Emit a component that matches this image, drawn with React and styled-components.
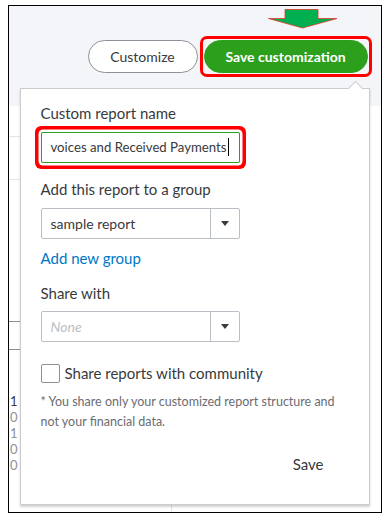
import styled, {createGlobalStyle} from "styled-components";

const GlobalStyle = createGlobalStyle`
  html, body {
    margin: 0;
    padding: 0;
    background: #fff;
  }
  body {
    font-family: Lato, "Open Sans", sans-serif;
    color: #393a3d;
  }
`

const Frame = styled.div`
  position: relative;
  box-sizing: border-box;
  width: 374px;
  height: 508px;
  margin: 5px 0 0 8px;
  border: 1.5px solid #000;
  overflow: hidden;
  background: #fff;
`

const Header = styled.div`
  position: relative;
  box-sizing: border-box;
  height: 100px;
  padding: 29.5px 9.5px 0 0;
  background: #f4f5f8;
  display: flex;
  justify-content: flex-end;
  align-items: flex-start;
  gap: 2px;
`

const Arrow = styled.svg`
  position: absolute;
  left: 258px;
  top: 3px;
`

const PillButton = styled.button`
  box-sizing: border-box;
  height: 33px;
  border-radius: 17px;
  font-family: Lato, "Open Sans", sans-serif;
  font-size: 14px;
  cursor: pointer;
  padding: 0;
  width: ${p => p.$width}px;
  margin-top: ${p => p.$offset || 0}px;
  border: 1px solid ${p => (p.$primary ? "#2ca01c" : "#8d9096")};
  background: ${p => (p.$primary ? "#2ca01c" : "#fff")};
  color: ${p => (p.$primary ? "#fff" : "#393a3d")};
  font-weight: ${p => (p.$primary ? 700 : 400)};
`

const Highlight = styled.div`
  display: flex;
  padding: 1px;
  border: 3px solid #f00;
  border-radius: 7px;
`

const Report = styled.div`
  display: flex;
  height: 406px;
`

const LeftColumn = styled.div`
  width: 162px;
  border-right: 1px solid #e3e5ea;
  display: flex;
  flex-direction: column;
`

const Row = styled.div`
  box-sizing: border-box;
  height: ${p => p.$h}px;
  border-bottom: 1px solid ${p => p.$line || "transparent"};
`

const Cells = styled.div`
  display: flex;
  flex-direction: column;
  padding: 0 0 0 1px;
  font-family: Lato, "Open Sans", sans-serif;
  font-size: 13px;
  line-height: 16px;
`

const Cell = styled.div`
  color: ${p => (p.$dark ? "#393a3d" : "#8d9096")};
`

const Popover = styled.div`
  position: absolute;
  left: 10.5px;
  top: 81.5px;
  width: 350px;
  box-sizing: border-box;
  padding: 14px 20px 30px 20px;
  background: #fff;
  border: 1px solid #ccc;
  box-shadow: 0 2px 2px rgba(0, 0, 0, 0.18);
  display: flex;
  flex-direction: column;
`

const Caret = styled.div`
  position: absolute;
  right: 8px;
  top: -6px;
  width: 10px;
  height: 10px;
  background: #fff;
  border-top: 1px solid #ccc;
  border-left: 1px solid #ccc;
  transform: rotate(45deg);
`

const Label = styled.div`
  font-size: 15px;
  line-height: 20px;
  color: #393a3d;
  margin-top: ${p => p.$top || 0}px;
`

const TextBox = styled.div`
  box-sizing: border-box;
  width: 199px;
  height: 31px;
  margin-top: 9px;
  border: 1px solid #2ca01c;
  border-radius: 2px;
  display: flex;
  align-items: center;
  padding-left: 9px;
  font-size: 13.2px;
  color: #393a3d;
  white-space: nowrap;
  overflow: hidden;
  box-shadow: 0 0 0 2.5px #fff, 0 0 0 6px #f00;
`

const Cursor = styled.span`
  display: inline-block;
  width: 1px;
  height: 18px;
  background: #000;
  margin-left: 1px;
`

const Select = styled.div`
  box-sizing: border-box;
  width: 199px;
  height: 31px;
  margin-top: ${p => p.$top || 9}px;
  border: 1px solid #babec5;
  border-radius: 2px;
  display: flex;
  align-items: stretch;
`

const SelectValue = styled.div`
  flex: 1;
  display: flex;
  align-items: center;
  padding-left: 9px;
  font-size: 14px;
  color: ${p => (p.$placeholder ? "#babec5" : "#393a3d")};
  font-style: ${p => (p.$placeholder ? "italic" : "normal")};
`

const SelectToggle = styled.div`
  width: 28px;
  border-left: 1px solid #babec5;
  display: flex;
  align-items: center;
  justify-content: center;
`

const Link = styled.a`
  margin-top: 9px;
  font-size: 15px;
  line-height: 20px;
  color: #0077c5;
  text-decoration: none;
  cursor: pointer;
`

const CheckRow = styled.label`
  display: flex;
  align-items: center;
  gap: 5px;
  margin-top: 22px;
  font-size: 15px;
  color: #393a3d;
`

const Box = styled.span`
  box-sizing: border-box;
  width: 19px;
  height: 19px;
  border: 1px solid #8d9096;
  border-radius: 2px;
  background: #fff;
`

const Note = styled.p`
  margin: 9px 0 0 0;
  font-size: 12.5px;
  line-height: 20px;
  color: #6b6c72;
`

const Footer = styled.div`
  display: flex;
  justify-content: flex-end;
  margin-top: 22px;
  padding-right: 25px;
`

const TextButton = styled.button`
  border: none;
  background: none;
  padding: 0;
  font-family: Lato, "Open Sans", sans-serif;
  font-size: 15px;
  line-height: 20px;
  color: #393a3d;
  cursor: pointer;
`

const Triangle = () => (
    <svg width="8" height="5" viewBox="0 0 8 5">
        <path d="M0 0 H8 L4 5 Z" fill="#393a3d"/>
    </svg>
)

const App = () => {
    const cells = [
        {text: "1 (", dark: true},
        {text: "0"},
        {text: "1"},
        {text: "0"},
        {text: "0"},
    ]

    return (
        <>
            <GlobalStyle/>
            <Frame>
                <Header>
                    <Arrow width="72" height="20" viewBox="0 0 72 20">
                        <path d="M18 0.5 H51 V9.5 H70 L35.5 19 L1.5 9.5 H18 Z" fill="#00b050" stroke="#e8342a" strokeWidth="0.8"/>
                    </Arrow>
                    <PillButton $width={110} $offset={4}>Customize</PillButton>
                    <Highlight>
                        <PillButton $primary $width={164}>Save customization</PillButton>
                    </Highlight>
                </Header>
                <Report>
                    <LeftColumn>
                        <Row $h={31} $line="#e3e5ea"/>
                        <Row $h={43} $line="#e3e5ea"/>
                        <Row $h={142} $line="#8d9096"/>
                        <Row $h={28} $line="#8d9096"/>
                        <Row $h={43}/>
                        <Cells>
                            {cells.map((c, i) => (
                                <Cell key={i} $dark={c.dark}>{c.text}</Cell>
                            ))}
                        </Cells>
                    </LeftColumn>
                </Report>
                <Popover>
                    <Caret/>
                    <Label>Custom report name</Label>
                    <TextBox>
                        voices and Received Payments<Cursor/>
                    </TextBox>
                    <Label $top={16}>Add this report to a group</Label>
                    <Select>
                        <SelectValue>sample report</SelectValue>
                        <SelectToggle><Triangle/></SelectToggle>
                    </Select>
                    <Link>Add new group</Link>
                    <Label $top={15}>Share with</Label>
                    <Select $top={8}>
                        <SelectValue $placeholder>None</SelectValue>
                        <SelectToggle><Triangle/></SelectToggle>
                    </Select>
                    <CheckRow>
                        <Box/>
                        Share reports with community
                    </CheckRow>
                    <Note>* You share only your customized report structure and not your financial data.</Note>
                    <Footer>
                        <TextButton>Save</TextButton>
                    </Footer>
                </Popover>
            </Frame>
        </>
    )
}

export default App
